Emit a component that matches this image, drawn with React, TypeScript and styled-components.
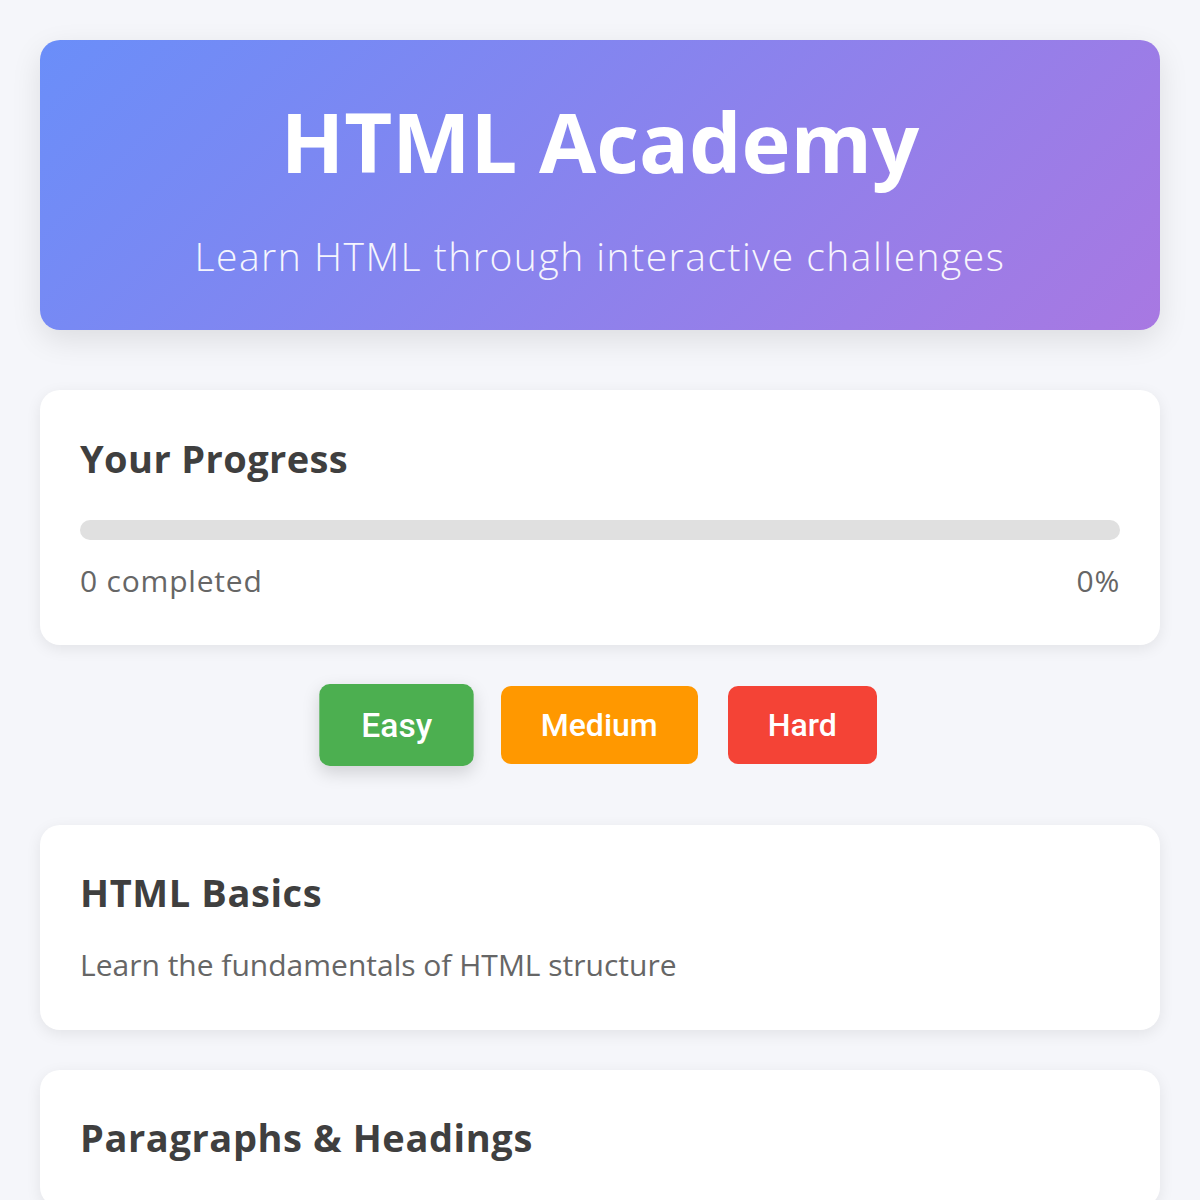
import React from 'react'
import styled, { createGlobalStyle } from 'styled-components'

const GlobalStyle = createGlobalStyle`
    body {
        margin: 0;
        background: #f5f6fa;
        font-family: "Open Sans", "Liberation Sans", sans-serif;
        color: #3f3f3f;
    }
`

type Level = 'easy' | 'medium' | 'hard'

const levels: { key: Level; label: string }[] = [
    { key: 'easy', label: 'Easy' },
    { key: 'medium', label: 'Medium' },
    { key: 'hard', label: 'Hard' },
]

const lessons: { title: string; text?: string }[] = [
    { title: 'HTML Basics', text: 'Learn the fundamentals of HTML structure' },
    { title: 'Paragraphs & Headings' },
]

const levelColors: Record<Level, string> = {
    easy: '#4caf50',
    medium: '#ff9800',
    hard: '#f44336',
}

const App = () => {
    const completed = 0
    const percent = 0
    const active: Level = 'easy'

    return (
        <Page>
            <GlobalStyle />
            <Header>
                <Title>HTML Academy</Title>
                <Subtitle>Learn HTML through interactive challenges</Subtitle>
            </Header>

            <ProgressCard>
                <CardTitle>Your Progress</CardTitle>
                <Track>
                    <Fill style={{ width: `${percent}%` }} />
                </Track>
                <Stats>
                    <span>{completed} completed</span>
                    <span>{percent}%</span>
                </Stats>
            </ProgressCard>

            <Levels>
                {levels.map((l) => (
                    <LevelButton key={l.key} $level={l.key} $active={l.key === active}>
                        {l.label}
                    </LevelButton>
                ))}
            </Levels>

            {lessons.map((lesson) => (
                <LessonCard key={lesson.title}>
                    <LessonTitle>{lesson.title}</LessonTitle>
                    {lesson.text && <LessonText>{lesson.text}</LessonText>}
                </LessonCard>
            ))}
        </Page>
    )
}

const Page = styled.div`
    padding: 40px;
    display: flex;
    flex-direction: column;
`

const Header = styled.header`
    background: linear-gradient(135deg, #6a8ef9 0%, #a878e2 100%);
    border-radius: 20px;
    padding: 51px 40px 49px;
    text-align: center;
    color: #fff;
    box-shadow: 0 10px 30px rgba(0, 0, 0, 0.1);
`

const Title = styled.h1`
    margin: 0 0 40px;
    font-size: 83px;
    line-height: 100px;
    font-weight: 700;
`

const Subtitle = styled.p`
    margin: 0;
    font-size: 39px;
    line-height: 50px;
    font-weight: 300;
    letter-spacing: 1.5px;
    opacity: 0.92;
`

const Card = styled.div`
    background: #fff;
    border-radius: 20px;
    box-shadow: 0 4px 15px rgba(0, 0, 0, 0.08);
`

const ProgressCard = styled(Card)`
    margin-top: 60px;
    padding: 40px 40px 42px;
`

const CardTitle = styled.h2`
    margin: 0;
    font-size: 38px;
    line-height: 56px;
    font-weight: 700;
    letter-spacing: 0.4px;
    color: #3f3f3f;
`

const Track = styled.div`
    margin-top: 34px;
    height: 20px;
    border-radius: 10px;
    background: #e0e0e0;
    overflow: hidden;
`

const Fill = styled.div`
    height: 100%;
    background: #4caf50;
`

const Stats = styled.div`
    margin-top: 18px;
    display: flex;
    justify-content: space-between;
    font-size: 30px;
    line-height: 45px;
    letter-spacing: 0.8px;
    color: #666;
`

const Levels = styled.div`
    margin: 41px 0 61px;
    display: flex;
    justify-content: center;
    gap: 30px;
`

const LevelButton = styled.button<{ $level: Level; $active: boolean }>`
    border: none;
    border-radius: 10px;
    padding: 20px 40px;
    font-family: Roboto, "Liberation Sans", sans-serif;
    font-size: 32px;
    font-weight: 500;
    color: #fff;
    background: ${(p) => levelColors[p.$level]};
    transform: ${(p) => (p.$active ? 'scale(1.05)' : 'none')};
    box-shadow: ${(p) => (p.$active ? '0 6px 16px rgba(0, 0, 0, 0.15)' : 'none')};
    cursor: pointer;
`

const LessonCard = styled(Card)`
    padding: 40px 40px 43px;
    margin-bottom: 40px;
`

const LessonTitle = styled.h3`
    margin: 0;
    font-size: 38px;
    line-height: 54px;
    font-weight: 700;
    letter-spacing: 0.6px;
    color: #3f3f3f;
`

const LessonText = styled.p`
    margin: 23px 0 0;
    font-size: 30px;
    line-height: 45px;
    color: #666;
`

export default App
